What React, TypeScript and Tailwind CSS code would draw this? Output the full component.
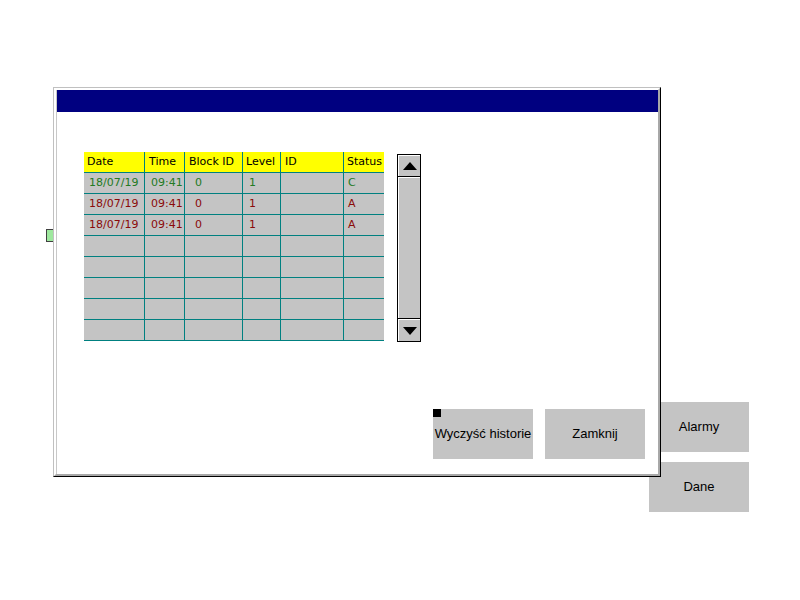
import React from "react";

const cols = [
  { w: 61, title: "Date", pad: 3, dpad: 5 },
  { w: 40, title: "Time", pad: 4, dpad: 6 },
  { w: 58, title: "Block ID", pad: 4, dpad: 10 },
  { w: 38, title: "Level", pad: 3, dpad: 6 },
  { w: 63, title: "ID", pad: 4, dpad: 4 },
  { w: 40, title: "Status", pad: 3, dpad: 4 },
];

const rows: { c: string; v: string[] }[] = [
  { c: "#237a23", v: ["18/07/19", "09:41", "0", "1", "", "C"] },
  { c: "#8a0a0a", v: ["18/07/19", "09:41", "0", "1", "", "A"] },
  { c: "#8a0a0a", v: ["18/07/19", "09:41", "0", "1", "", "A"] },
  { c: "#000", v: ["", "", "", "", "", ""] },
  { c: "#000", v: ["", "", "", "", "", ""] },
  { c: "#000", v: ["", "", "", "", "", ""] },
  { c: "#000", v: ["", "", "", "", "", ""] },
  { c: "#000", v: ["", "", "", "", "", ""] },
];

function Arrow({ up }: { up: boolean }) {
  return (
    <svg width="14" height="8" viewBox="0 0 14 8">
      {up ? <polygon points="7,0 14,8 0,8" fill="#000" /> : <polygon points="0,0 14,0 7,8" fill="#000" />}
    </svg>
  );
}

export default function App() {
  return (
    <div
      className="relative w-[800px] h-[600px] bg-white overflow-hidden"
      style={{ fontFamily: '"Liberation Sans", Arial, sans-serif' }}
    >
      {/* background items */}
      <div className="absolute left-[46px] top-[229px] w-[8px] h-[13px] bg-[#9ee89e] border-l border-t border-b border-[#404040]" />
      <div className="absolute left-[649px] top-[402px] w-[100px] h-[50px] bg-[#c4c4c4] flex items-center justify-center text-[13px] text-black">
        Alarmy
      </div>
      <div className="absolute left-[649px] top-[462px] w-[100px] h-[50px] bg-[#c4c4c4] flex items-center justify-center text-[13px] text-black">
        Dane
      </div>

      {/* dialog window */}
      <div className="absolute left-[53px] top-[87px] w-[608px] h-[390px] border border-t-[#c0c0c0] border-l-[#c0c0c0] border-r-black border-b-black bg-white">
        <div className="w-full h-full border-2 border-t-white border-l-white border-r-[#a8a8a8] border-b-[#a8a8a8]">
          <div className="w-full h-full border-l border-[#c8c8c8] flex flex-col">
            <div className="h-[22px] bg-[#000080] shrink-0" />
            <div className="flex flex-col pl-[27px] pt-[40px] pr-[13px]">
              <div className="flex items-start">
                {/* table */}
                <div
                  className="flex flex-col text-[11px]"
                  style={{ fontFamily: '"DejaVu Sans", Verdana, sans-serif' }}
                >
                  <div className="flex bg-[#ffff00] h-[21px] border-b border-[#008080]">
                    {cols.map((c, i) => (
                      <div
                        key={i}
                        className={`h-full flex items-center text-black ${i < cols.length - 1 ? "border-r border-[#008080]" : ""}`}
                        style={{ width: c.w, paddingLeft: c.pad }}
                      >
                        {c.title}
                      </div>
                    ))}
                  </div>
                  {rows.map((r, ri) => (
                    <div key={ri} className="flex bg-[#c4c4c4] h-[21px] border-b border-[#008080]">
                      {cols.map((c, i) => (
                        <div
                          key={i}
                          className={`h-full flex items-center ${i < cols.length - 1 ? "border-r border-[#008080]" : ""}`}
                          style={{ width: c.w, paddingLeft: c.dpad, color: r.c }}
                        >
                          {r.v[i]}
                        </div>
                      ))}
                    </div>
                  ))}
                </div>
                {/* scrollbar */}
                <div className="ml-[13px] mt-[2px] w-[24px] h-[188px] border border-black bg-[#c4c4c4] flex flex-col">
                  <div className="h-[22px] border-b border-black shrink-0">
                    <div className="w-full h-full border-t border-l border-white flex items-center justify-center">
                      <Arrow up />
                    </div>
                  </div>
                  <div className="flex-1 border-t border-l border-white" />
                  <div className="h-[23px] border-t border-black shrink-0">
                    <div className="w-full h-full border-t border-l border-white flex items-center justify-center">
                      <Arrow up={false} />
                    </div>
                  </div>
                </div>
              </div>
              <div className="flex justify-end gap-[12px] mt-[67px]">
                <div className="relative w-[100px] h-[50px] bg-[#c4c4c4] flex items-center justify-center text-[13px] text-black whitespace-nowrap">
                  <div className="absolute left-0 top-0 w-[8px] h-[8px] bg-black" />
                  Wyczyść historie
                </div>
                <div className="w-[100px] h-[50px] bg-[#c4c4c4] flex items-center justify-center text-[13px] text-black">
                  Zamknij
                </div>
              </div>
            </div>
          </div>
        </div>
      </div>
    </div>
  );
}
